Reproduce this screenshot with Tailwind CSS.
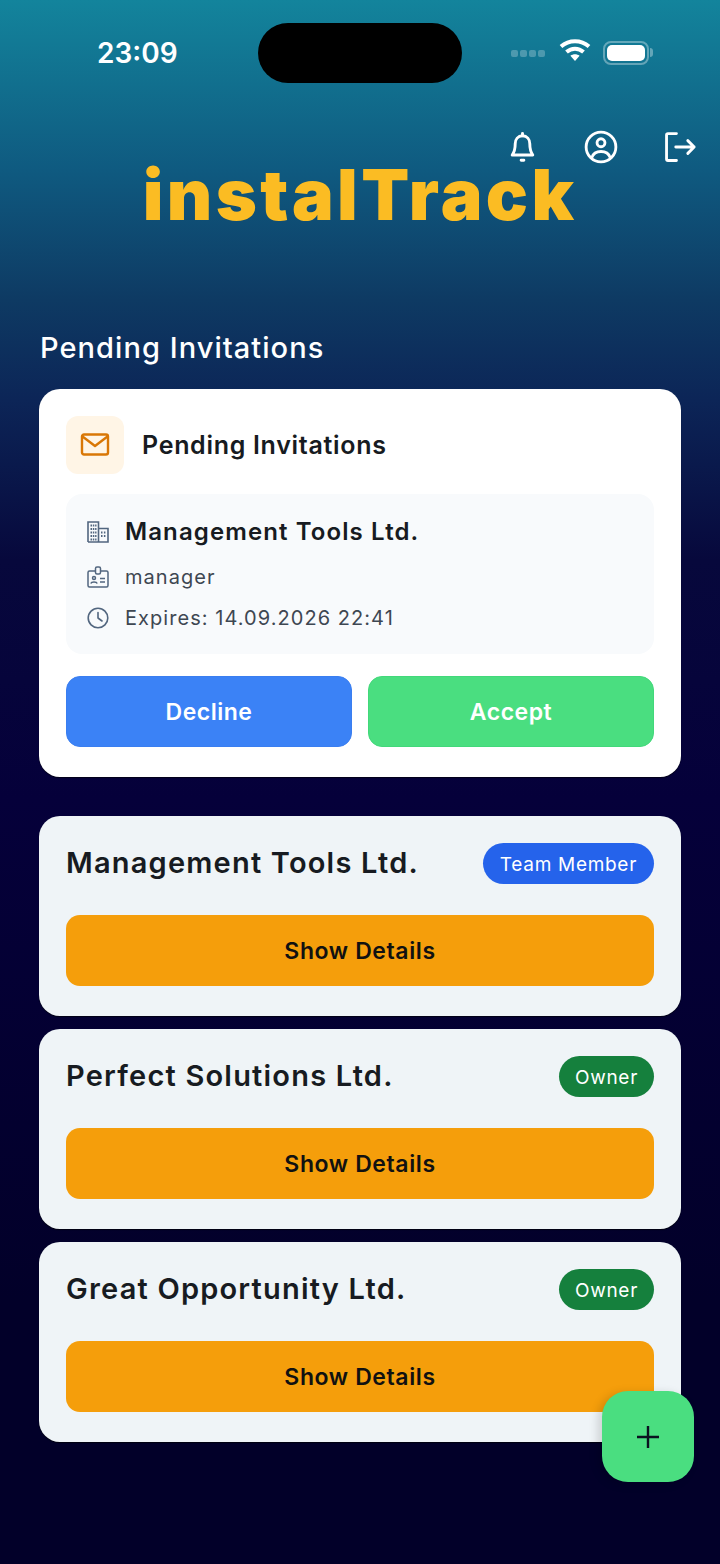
<!DOCTYPE html>
<html lang="en">
<head>
  <meta charset="UTF-8" />
  <meta name="viewport" content="width=device-width, initial-scale=1.0" />
  <title>instalTrack</title>
  <script src="https://cdn.jsdelivr.net/npm/@tailwindcss/browser@4"></script>
</head>
<body class="bg-[#02002a] font-['Inter',sans-serif]">
  <div class="relative w-[720px] h-[1564px] overflow-hidden bg-[linear-gradient(180deg,#13849c_0px,#0f5a80_170px,#0e3a63_300px,#0c2557_400px,#07083c_560px,#05003a_800px,#020029_1300px,#020029_1564px)]">

    <!-- status bar -->
    <div class="flex items-center h-[60px] mt-[23px] pl-[97px] pr-[66px]">
      <span class="w-[161px] text-[28px] font-semibold text-white">23:09</span>
      <div class="w-[204px] h-[60px] rounded-[30px] bg-black"></div>
      <div class="flex items-center ml-[49px]">
        <div class="flex gap-[2px] w-[48px]">
          <span class="w-[7px] h-[7px] rounded-[2px] bg-white/25"></span>
          <span class="w-[7px] h-[7px] rounded-[2px] bg-white/25"></span>
          <span class="w-[7px] h-[7px] rounded-[2px] bg-white/25"></span>
          <span class="w-[7px] h-[7px] rounded-[2px] bg-white/25"></span>
        </div>
        <svg class="w-[32px] h-[24px] -mt-[6px]" viewBox="0 0 32 24" fill="none" stroke="white" stroke-width="4">
          <path d="M2 8.500c8-7 20-7 28 0" />
          <path d="M7.500 14c5-4.400 12-4.400 17 0" />
          <path d="M16 23l-4.600-5.200c2.800-2 6.400-2 9.200 0z" fill="white" stroke="none" />
        </svg>
        <div class="relative ml-[12px] w-[46px] h-[24px] rounded-[8px] border-2 border-white/35 p-[2px] -mt-[1px]">
          <div class="w-full h-full rounded-[5px] bg-white"></div>
          <span class="absolute -right-[6px] top-[5px] w-[3px] h-[9px] rounded-r-sm bg-white/35"></span>
        </div>
      </div>
    </div>

    <!-- header icons -->
    <div class="flex justify-end items-center gap-[45px] mt-[47px] pr-[23px] h-[34px]">
      <svg class="w-[33px] h-[33px]" viewBox="0 0 24 24" fill="none" stroke="white" stroke-width="2.100" stroke-linecap="round" stroke-linejoin="round">
        <path d="M12 3.500c-3.300 0-5.300 2.600-5.300 5.800 0 3.900-.6 6-2.200 8.200h15c-1.600-2.200-2.200-4.300-2.200-8.200 0-3.200-2-5.800-5.300-5.800z" />
        <path d="M12 1.700v1.800M11 21.300h2" />
      </svg>
      <svg class="w-[34px] h-[34px]" viewBox="0 0 24 24" fill="none" stroke="white" stroke-width="2" stroke-linecap="round" stroke-linejoin="round">
        <circle cx="12" cy="12" r="10.500" />
        <circle cx="12" cy="9" r="2.800" />
        <path d="M5.500 19.500c1-3 3.500-4.300 6.500-4.300s5.500 1.300 6.500 4.300" />
      </svg>
      <svg class="w-[34px] h-[34px]" viewBox="0 0 24 24" fill="none" stroke="white" stroke-width="2" stroke-linecap="round" stroke-linejoin="round">
        <path d="M9.500 2.500H3.500a1 1 0 0 0-1 1v17a1 1 0 0 0 1 1h6" />
        <path d="M9 12h13M17.500 7.500L22 12l-4.500 4.500" />
      </svg>
    </div>

    <!-- logo -->
    <h1 class="-mt-[13px] text-center text-[70px] leading-[87px] font-black tracking-[3.400px] text-[#fbbc23]">instalTrack</h1>

    <!-- content -->
    <div class="mt-[92px] px-[39px]">
      <h2 class="pl-[1px] text-[29px] leading-[36px] font-medium tracking-[1.050px] text-white">Pending Invitations</h2>

      <section class="mt-[23px] h-[388px] rounded-[21px] bg-white shadow-[0_1px_1px_rgba(0,0,0,0.6)] pt-[27px] px-[27px]">
        <div class="flex items-center gap-[18px]">
          <div class="flex items-center justify-center w-[58px] h-[58px] rounded-[12px] bg-[#fff5e6]">
            <svg class="w-[30px] h-[26px]" viewBox="0 0 30 26" fill="none" stroke="#d97706" stroke-width="2.400" stroke-linejoin="round" stroke-linecap="round">
              <rect x="2" y="2.500" width="26" height="20" rx="2" />
              <path d="M2.500 4.500L15 14 27.500 4.500" />
            </svg>
          </div>
          <span class="pt-[2px] text-[25px] font-semibold tracking-[0.7px] text-[#171b21]">Pending Invitations</span>
        </div>

        <div class="mt-[20px] h-[160px] rounded-[16px] bg-[#f8fafc] pl-[21px] pt-[20px]">
          <div class="flex items-center gap-[16px] h-[36px]">
            <svg class="w-[22px] h-[22px]" viewBox="0 0 22 22" fill="none" stroke="#52667f" stroke-width="1.600">
              <path d="M1 21V1h10.500v20M11.500 7.500H21V21H1" />
              <path d="M3.500 4.500h6M3.500 8h6M3.500 11.500h6M3.500 15h6M3.500 18.500h6" stroke-width="2" stroke-dasharray="1.500 0.800" />
              <path d="M14 11.500h4.500M14 15h4.500" stroke-width="2" stroke-dasharray="1.500 1.400" />
            </svg>
            <span class="text-[24px] font-semibold tracking-[1.100px] text-[#171b21]">Management Tools Ltd.</span>
          </div>
          <div class="flex items-center gap-[16px] mt-[12px] h-[30px]">
            <svg class="w-[22px] h-[22px]" viewBox="0 0 22 22" fill="none" stroke="#52667f" stroke-width="1.500" stroke-linejoin="round">
              <rect x="1" y="5" width="20" height="16" rx="1.500" />
              <rect x="8.500" y="1" width="5" height="7" rx="1.500" fill="#f8fafc" />
              <circle cx="7" cy="12" r="1.500" />
              <path d="M3.800 17.500c.6-2 5.800-2 6.400 0M13 12.500h5M13 16h5" />
            </svg>
            <span class="text-[20px] tracking-[1.050px] text-[#3e4752]">manager</span>
          </div>
          <div class="flex items-center gap-[16px] mt-[11px] h-[30px]">
            <svg class="w-[22px] h-[22px]" viewBox="0 0 22 22" fill="none" stroke="#52667f" stroke-width="1.600" stroke-linecap="round" stroke-linejoin="round">
              <circle cx="11" cy="11" r="9.800" />
              <path d="M11 5.500V11l4 3" />
            </svg>
            <span class="text-[20px] tracking-[1.050px] text-[#3e4752]">Expires: 14.09.2026 22:41</span>
          </div>
        </div>

        <div class="grid grid-cols-2 gap-[16px] mt-[22px]">
          <button class="h-[71px] pt-[2px] rounded-[14px] bg-[#3b82f6] border border-[#3a7ef0] text-[23px] font-semibold tracking-[0.5px] text-white">Decline</button>
          <button class="h-[71px] pt-[2px] rounded-[14px] bg-[#4ade80] border border-[#42d87a] text-[23px] font-semibold tracking-[0.5px] text-white">Accept</button>
        </div>
      </section>

      <div class="flex flex-col gap-[13px] mt-[39px]">
        <section class="h-[200px] rounded-[21px] bg-[#eff4f7] shadow-[0_1px_1px_rgba(0,0,0,0.6)] pt-[27px] px-[27px]">
          <div class="flex items-center justify-between h-[41px]">
            <span class="pb-[2px] text-[29px] font-semibold tracking-[1.200px] text-[#171b21]">Management Tools Ltd.</span>
            <span class="flex items-center h-[41px] pt-[3px] rounded-full bg-[#2563eb] px-[17px] text-[19px] tracking-[0.7px] text-white">Team Member</span>
          </div>
          <button class="mt-[31px] w-full h-[71px] pt-[2px] rounded-[14px] bg-[#f59e0b] text-[23px] font-semibold tracking-[0.6px] text-[#111]">Show Details</button>
        </section>
        <section class="h-[200px] rounded-[21px] bg-[#eff4f7] shadow-[0_1px_1px_rgba(0,0,0,0.6)] pt-[27px] px-[27px]">
          <div class="flex items-center justify-between h-[41px]">
            <span class="pb-[2px] text-[29px] font-semibold tracking-[1.200px] text-[#171b21]">Perfect Solutions Ltd.</span>
            <span class="flex items-center h-[41px] pt-[3px] rounded-full bg-[#15803d] px-[16px] text-[19px] tracking-[0.7px] text-white">Owner</span>
          </div>
          <button class="mt-[31px] w-full h-[71px] pt-[2px] rounded-[14px] bg-[#f59e0b] text-[23px] font-semibold tracking-[0.6px] text-[#111]">Show Details</button>
        </section>
        <section class="h-[200px] rounded-[21px] bg-[#eff4f7] shadow-[0_1px_1px_rgba(0,0,0,0.6)] pt-[27px] px-[27px]">
          <div class="flex items-center justify-between h-[41px]">
            <span class="pb-[2px] text-[29px] font-semibold tracking-[1.200px] text-[#171b21]">Great Opportunity Ltd.</span>
            <span class="flex items-center h-[41px] pt-[3px] rounded-full bg-[#15803d] px-[16px] text-[19px] tracking-[0.7px] text-white">Owner</span>
          </div>
          <button class="mt-[31px] w-full h-[71px] pt-[2px] rounded-[14px] bg-[#f59e0b] text-[23px] font-semibold tracking-[0.6px] text-[#111]">Show Details</button>
        </section>
      </div>
    </div>

    <!-- floating add button -->
    <button class="absolute left-[602px] top-[1391px] flex items-center justify-center w-[92px] h-[91px] rounded-[26px] bg-[#4ade80] shadow-[-4px_2px_10px_rgba(0,0,0,0.15)]">
      <svg class="w-[24px] h-[24px]" viewBox="0 0 24 24" stroke="#0b1220" stroke-width="2.400"><path d="M12 1v22M1 12h22" /></svg>
    </button>
  </div>
</body>
</html>
